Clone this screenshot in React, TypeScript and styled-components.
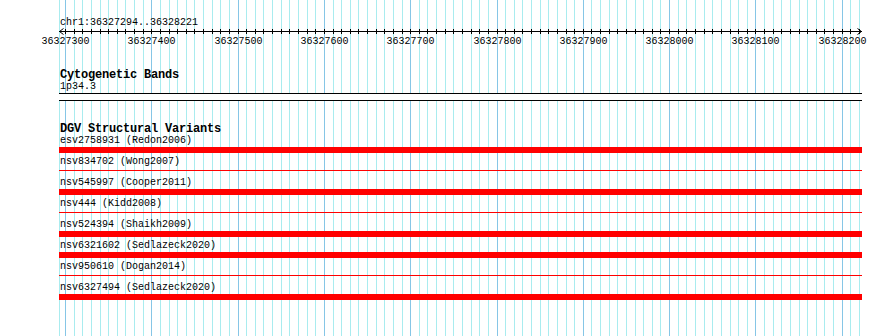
import styled, { createGlobalStyle } from 'styled-components';

const GlobalStyle = createGlobalStyle`
  body {
    margin: 0;
    background: #fff;
  }
  * {
    box-sizing: border-box;
  }
`;

// 36327300 sits at x=65, one tick / gridline every 10bp
const ORIGIN = 65;
const STEP = 8.63;
const TICKS = Array.from({ length: 93 }, (_, k) => ({
    x: Math.round(ORIGIN + k * STEP),
    major: k % 10 === 0,
    pos: 36327300 + k * 10,
}));

const VARIANTS = [
    { name: 'esv2758931 (Redon2006)', thin: false },
    { name: 'nsv834702 (Wong2007)', thin: true },
    { name: 'nsv545997 (Cooper2011)', thin: false },
    { name: 'nsv444 (Kidd2008)', thin: true },
    { name: 'nsv524394 (Shaikh2009)', thin: false },
    { name: 'nsv6321602 (Sedlazeck2020)', thin: false },
    { name: 'nsv950610 (Dogan2014)', thin: true },
    { name: 'nsv6327494 (Sedlazeck2020)', thin: false },
];

const GridLines = () => (
    <GridLayer width={890} height={336} shapeRendering="crispEdges">
        <rect x={59} y={0} width={1} height={336} fill="#a9ecef" />
        {TICKS.map(t => (
            <rect key={t.x} x={t.x} y={0} width={1} height={336} fill={t.major ? '#86c6e6' : '#a9ecef'} />
        ))}
    </GridLayer>
);

const Ruler = () => (
    <ScaleBar width={890} height={20} shapeRendering="crispEdges">
        <rect x={59} y={3} width={803} height={1} fill="#000" />
        <path d="M59.5 3.5 L63.5 0.5 M59.5 3.5 L63.5 6.5 M861.5 3.5 L857.5 0.5 M861.5 3.5 L857.5 6.5" stroke="#000" fill="none" shapeRendering="auto" />
        {TICKS.map(t => (
            <rect key={t.x} x={t.x} y={1} width={1} height={5} fill="#000" />
        ))}
        {TICKS.filter(t => t.major).map(t => (
            <ScaleText key={t.pos} x={t.x + 0.5} y={16} textAnchor="middle">
                {t.pos}
            </ScaleText>
        ))}
    </ScaleBar>
);

const App = () => {
    return (
        <Page>
            <GlobalStyle />
            <GridLines />
            <View>
                <LocationLabel>chr1:36327294..36328221</LocationLabel>
                <Ruler />

                <Track $gap={21}>
                    <TrackTitle>Cytogenetic Bands</TrackTitle>
                    <BandLabel>1p34.3</BandLabel>
                    <CytoBand />
                </Track>

                <Track $gap={22}>
                    <TrackTitle>DGV Structural Variants</TrackTitle>
                    {VARIANTS.map(v => (
                        <FeatureRow key={v.name}>
                            <FeatureLabel>{v.name}</FeatureLabel>
                            <FeatureBar $thin={v.thin} />
                        </FeatureRow>
                    ))}
                </Track>
            </View>
        </Page>
    );
};

export default App;

const Page = styled.div`
    position: relative;
    width: 890px;
    height: 336px;
    overflow: hidden;
    background: #fff;
    color: #000;
    font-family: 'Liberation Mono', 'DejaVu Sans Mono', monospace;
`;

const GridLayer = styled.svg`
    position: absolute;
    left: 0;
    top: 0;
    display: block;
`;

const View = styled.div`
    position: relative;
    display: flex;
    flex-direction: column;
    padding-top: 17px;
`;

const LocationLabel = styled.div`
    padding-left: 60px;
    font-size: 10px;
    line-height: 11px;
    white-space: nowrap;
`;

const ScaleBar = styled.svg`
    display: block;
    overflow: visible;
`;

const ScaleText = styled.text`
    font-family: 'Liberation Mono', 'DejaVu Sans Mono', monospace;
    font-size: 10px;
    fill: #000;
`;

const Track = styled.div<{ $gap: number }>`
    display: flex;
    flex-direction: column;
    margin-top: ${p => p.$gap}px;
    margin-left: 59px;
    width: 803px;
`;

const TrackTitle = styled.div`
    padding-left: 1px;
    font-size: 12px;
    font-weight: 700;
    line-height: 12px;
    letter-spacing: -0.2px;
    white-space: nowrap;
`;

const BandLabel = styled.div`
    padding-left: 1px;
    font-size: 10px;
    line-height: 11px;
`;

const CytoBand = styled.div`
    margin-top: 1px;
    height: 8px;
    border-top: 1px solid #000;
    border-bottom: 1px solid #000;
    background: #fff;
`;

const FeatureRow = styled.div`
    display: flex;
    flex-direction: column;
    height: 21px;
`;

const FeatureLabel = styled.div`
    padding-left: 1px;
    font-size: 10px;
    line-height: 11px;
    white-space: nowrap;
`;

const FeatureBar = styled.div<{ $thin: boolean }>`
    margin-top: ${p => (p.$thin ? 3 : 1)}px;
    height: ${p => (p.$thin ? 1 : 6)}px;
    background: #ff0000;
`;
